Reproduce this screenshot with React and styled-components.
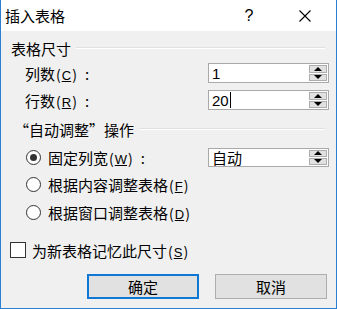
import React from "react";
import styled, { createGlobalStyle } from "styled-components";

const Global = createGlobalStyle`
  html, body { margin: 0; padding: 0; background: #ffffff; }
  body { font-family: "Noto Sans CJK SC", "Noto Sans", sans-serif; }
`;

const Window = styled.div`
  width: 337px;
  height: 309px;
  box-sizing: border-box;
  border: 1px solid #2b7fd3;
  border-top: none;
  display: flex;
  flex-direction: column;
  background: #f0f0f0;
  font-family: "Noto Sans CJK SC", "Noto Sans", sans-serif;
  color: #000;
`;

const TitleBar = styled.div`
  height: 31px;
  flex: none;
  background: #fff;
  display: flex;
  align-items: center;
  padding-left: 4px;
  font-size: 15px;
`;

const Title = styled.div`
  flex: 1;
  line-height: 31px;
`;

const TitleBtn = styled.div`
  width: ${(p) => p.$w}px;
  height: 31px;
  display: flex;
  align-items: center;
  justify-content: center;
  font-family: "Liberation Sans", sans-serif;
  font-size: 16px;
`;

const Body = styled.div`
  flex: 1;
  display: flex;
  flex-direction: column;
  padding: 0 7px 0 0;
`;

const GroupHead = styled.div`
  display: flex;
  align-items: center;
  height: 16px;
  margin-top: ${(p) => p.$mt}px;
  padding-left: ${(p) => p.$pl}px;
  font-size: 15px;
  white-space: nowrap;
  &::after {
    content: "";
    flex: 1;
    margin-left: 5px;
    margin-right: 4px;
    height: 1px;
    background: #e0e0e0;
    border-bottom: 1px solid #ffffff;
  }
`;

const Row = styled.div`
  display: flex;
  align-items: center;
  justify-content: space-between;
  height: 20px;
  margin-top: ${(p) => p.$mt}px;
  padding-left: ${(p) => p.$pl}px;
  font-size: 15px;
  white-space: nowrap;
`;

const LabelGroup = styled.div`
  display: flex;
  align-items: center;
  gap: ${(p) => p.$gap || 7}px;
`;

const Key = styled.span`
  text-decoration: underline;
  text-underline-offset: 1px;
  font-family: "Liberation Sans", sans-serif;
  font-size: 13px;
`;

const Paren = styled.span`
  font-size: 14px;
  margin: 0 1px;
`;

const Colon = styled.span`
  margin-left: 7px;
`;

const Field = styled.div`
  width: 121px;
  height: ${(p) => p.$h}px;
  box-sizing: border-box;
  border: 1px solid #a9a9a9;
  background: #fff;
  display: flex;
  align-items: stretch;
`;

const FieldText = styled.div`
  flex: 1;
  padding-left: 3px;
  display: flex;
  align-items: center;
  font-size: 15px;
  font-family: ${(p) => (p.$cjk ? '"Noto Sans CJK SC", sans-serif' : '"Liberation Sans", sans-serif')};
`;

const Caret = styled.span`
  display: inline-block;
  width: 1px;
  height: 16px;
  background: #000;
  margin-left: 1px;
`;

const Spin = styled.div`
  width: 18px;
  display: flex;
  flex-direction: column;
  gap: 1px;
  padding: 1px 1px 1px 0;
`;

const SpinBtn = styled.div`
  flex: 1;
  background: #e1e1e1;
  border: 1px solid #adadad;
  display: flex;
  align-items: center;
  justify-content: center;
`;

const Tri = styled.div`
  width: 0;
  height: 0;
  border-left: 4px solid transparent;
  border-right: 4px solid transparent;
  ${(p) =>
    p.$up ? "border-bottom: 4px solid #000;" : "border-top: 4px solid #000;"}
`;

const Radio = styled.div`
  width: 13px;
  height: 13px;
  border-radius: 50%;
  border: 1px solid #333;
  background: #fff;
  display: flex;
  align-items: center;
  justify-content: center;
  &::after {
    content: "";
    display: ${(p) => (p.$on ? "block" : "none")};
    width: 7px;
    height: 7px;
    border-radius: 50%;
    background: #333;
  }
`;

const Check = styled.div`
  width: 14px;
  height: 14px;
  border: 1px solid #333;
  background: #fff;
`;

const Buttons = styled.div`
  display: flex;
  justify-content: flex-end;
  gap: 16px;
  margin-top: 14px;
  padding-right: 2px;
`;

const Button = styled.div`
  width: 112px;
  height: 25px;
  box-sizing: border-box;
  background: #e1e1e1;
  border: ${(p) => (p.$def ? "2px solid #0f78d4" : "1px solid #adadad")};
  display: flex;
  align-items: center;
  justify-content: center;
  font-size: 15px;
`;

function SpinBox({ children, cjk, h = 20 }) {
  return (
    <Field $h={h}>
      <FieldText $cjk={cjk}>{children}</FieldText>
      <Spin>
        <SpinBtn>
          <Tri $up />
        </SpinBtn>
        <SpinBtn>
          <Tri />
        </SpinBtn>
      </Spin>
    </Field>
  );
}

const Acc = ({ k }) => (
  <>
    <Paren>(</Paren>
    <Key>{k}</Key>
    <Paren>)</Paren>
  </>
);

export default function App() {
  return (
    <>
      <Global />
      <Window>
        <TitleBar>
          <Title>插入表格</Title>
          <TitleBtn $w={50}>?</TitleBtn>
          <TitleBtn $w={62}>
            <svg width="12" height="12" viewBox="0 0 12 12">
              <path d="M0.5 0.5 L11.5 11.5 M11.5 0.5 L0.5 11.5" stroke="#000" strokeWidth="1.1" />
            </svg>
          </TitleBtn>
        </TitleBar>
        <Body>
          <GroupHead $mt={9} $pl={10}>表格尺寸</GroupHead>
          <Row $mt={7} $pl={24}>
            <span>
              列数<Acc k="C" />
              <Colon>:</Colon>
            </span>
            <SpinBox>1</SpinBox>
          </Row>
          <Row $mt={7} $pl={24}>
            <span>
              行数<Acc k="R" />
              <Colon>:</Colon>
            </span>
            <SpinBox>
              20
              <Caret />
            </SpinBox>
          </Row>
          <GroupHead $mt={11} $pl={13}>“自动调整”操作</GroupHead>
          <Row $mt={10} $pl={25}>
            <LabelGroup>
              <Radio $on />
              <span>
                固定列宽<Acc k="W" />
                <Colon>:</Colon>
              </span>
            </LabelGroup>
            <SpinBox cjk h={19}>
              自动
            </SpinBox>
          </Row>
          <Row $mt={7} $pl={25}>
            <LabelGroup>
              <Radio />
              <span>
                根据内容调整表格<Acc k="F" />
              </span>
            </LabelGroup>
          </Row>
          <Row $mt={8} $pl={25}>
            <LabelGroup>
              <Radio />
              <span>
                根据窗口调整表格<Acc k="D" />
              </span>
            </LabelGroup>
          </Row>
          <Row $mt={18} $pl={9}>
            <LabelGroup $gap={6}>
              <Check />
              <span>
                为新表格记忆此尺寸<Acc k="S" />
              </span>
            </LabelGroup>
          </Row>
          <Buttons>
            <Button $def>确定</Button>
            <Button>取消</Button>
          </Buttons>
        </Body>
      </Window>
    </>
  );
}
